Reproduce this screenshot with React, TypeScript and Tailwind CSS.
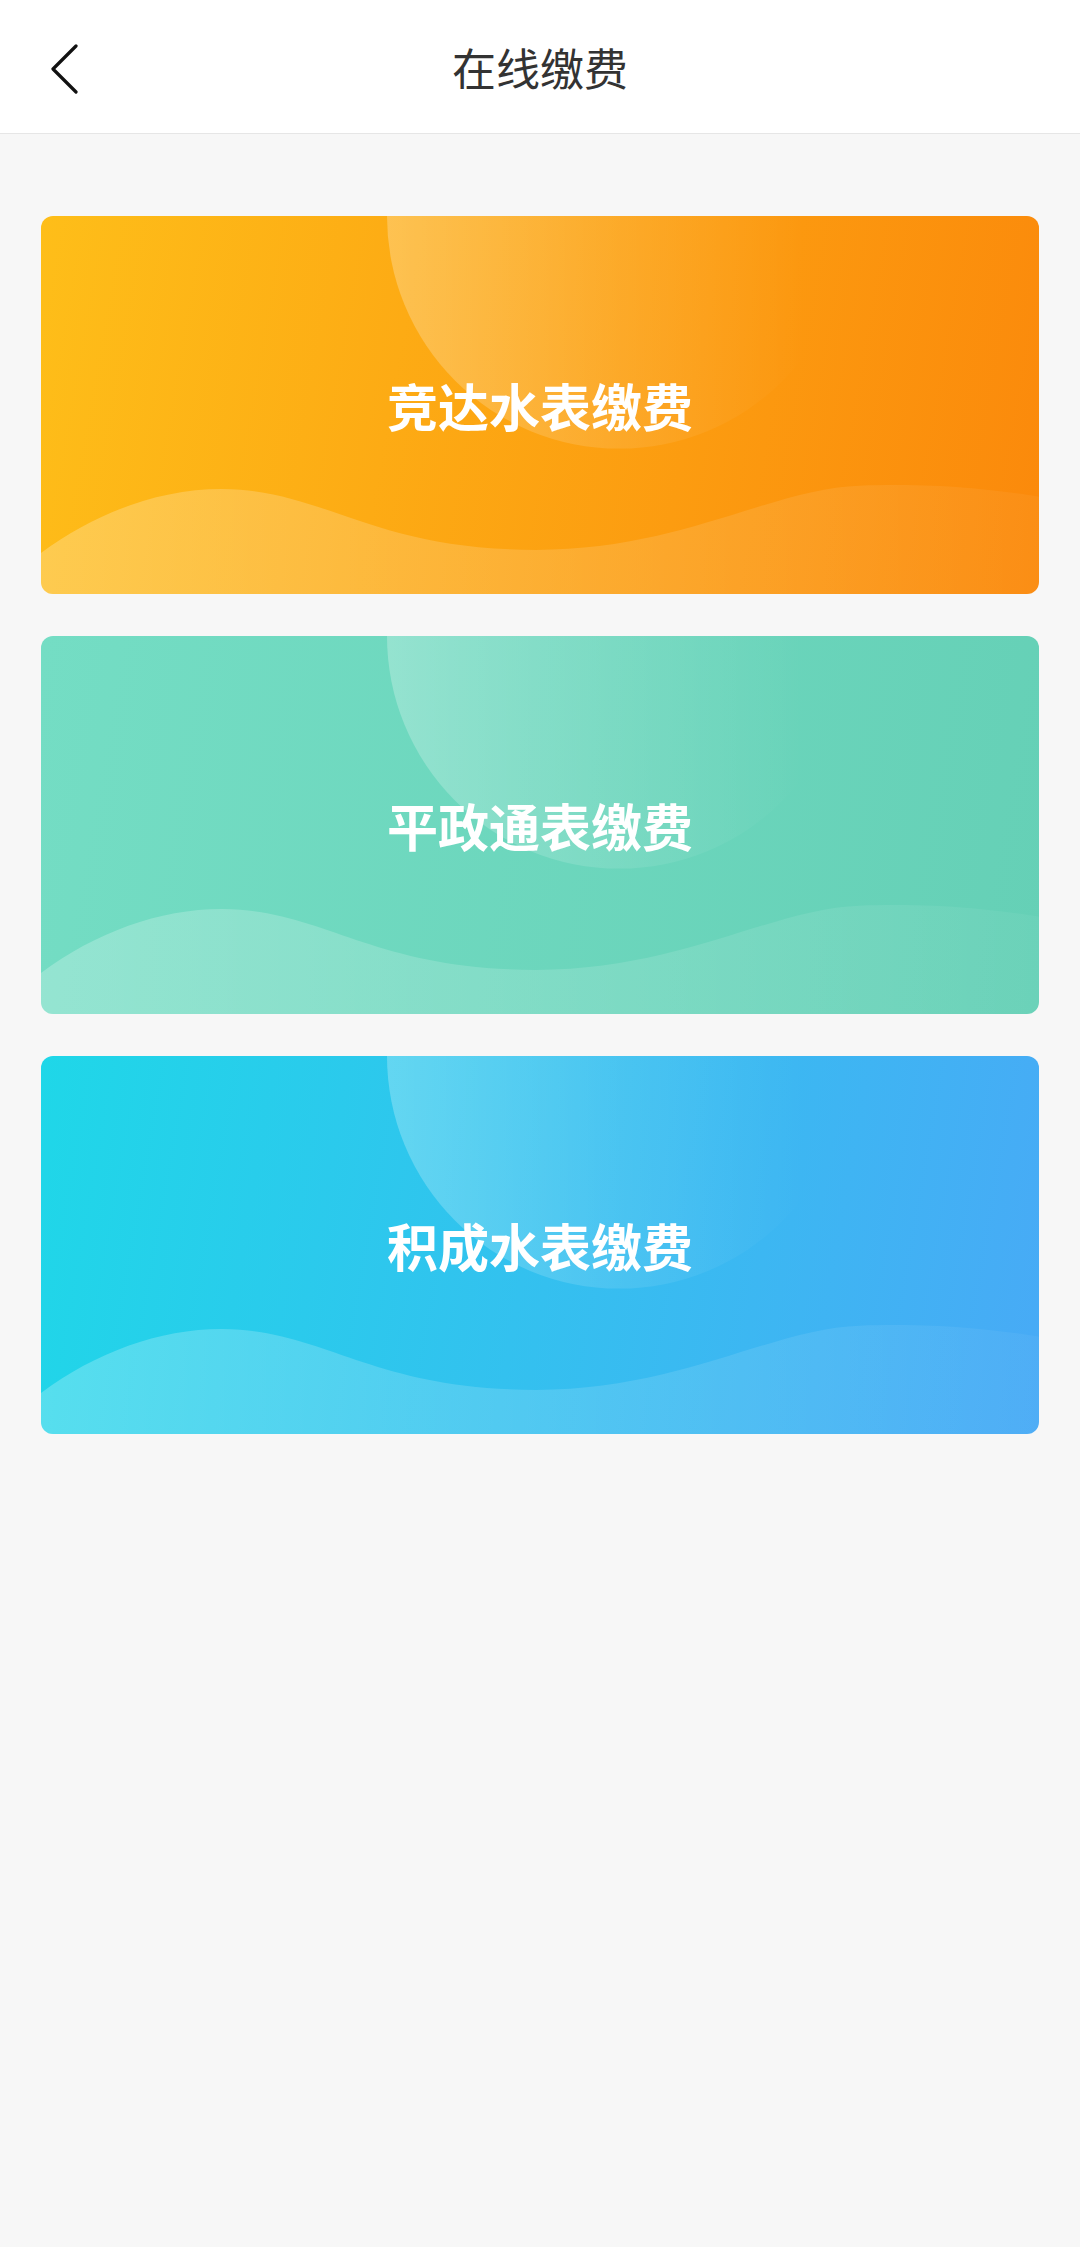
import React from 'react';

interface CardProps {
  title: string;
  from: string;
  to: string;
  id: string;
}

const cards: CardProps[] = [
  { id: 'jd', title: '竞达水表缴费', from: '#FEBE19', to: '#FB890B' },
  { id: 'pzt', title: '平政通表缴费', from: '#74DDC4', to: '#65D0B6' },
  { id: 'jc', title: '积成水表缴费', from: '#1FD7E8', to: '#48AAF6' },
];

const PayCard: React.FC<CardProps> = ({ id, title, from, to }) => {
  return (
    <div
      className="relative h-[378px] rounded-[12px] overflow-hidden flex items-center justify-center cursor-pointer"
      style={{ background: `linear-gradient(100deg, ${from}, ${to})` }}
    >
      {/* decorative circle + wave */}
      <svg
        className="absolute inset-0 w-full h-full"
        viewBox="0 0 998 377"
        preserveAspectRatio="none"
      >
        <defs>
          <linearGradient id={`c-${id}`} x1="0" y1="0" x2="1" y2="0">
            <stop offset="0" stopColor="#fff" stopOpacity="0.26" />
            <stop offset="0.5" stopColor="#fff" stopOpacity="0.1" />
            <stop offset="0.9" stopColor="#fff" stopOpacity="0" />
          </linearGradient>
          <linearGradient id={`w-${id}`} x1="0" y1="0" x2="1" y2="0">
            <stop offset="0" stopColor="#fff" stopOpacity="0.24" />
            <stop offset="1" stopColor="#fff" stopOpacity="0.04" />
          </linearGradient>
        </defs>
        <circle cx="578" cy="0" r="232" fill={`url(#c-${id})`} />
        <path
          d="M0,336 C60,292 130,268 199,273 C290,280 340,333 495,333 C640,333 730,272 819,269 C900,266 960,274 998,280 L998,377 L0,377 Z"
          fill={`url(#w-${id})`}
        />
      </svg>
      <span className="relative text-white text-[51px] font-bold leading-none font-['Noto_Sans_CJK_SC',sans-serif]">
        {title}
      </span>
    </div>
  );
};

const App: React.FC = () => {
  return (
    <div className="min-h-screen bg-[#f7f7f7] font-['Noto_Sans_CJK_SC',sans-serif]">
      {/* Header */}
      <div className="relative h-[134px] bg-white border-b border-[#e6e6e6] flex items-center justify-center">
        <button className="absolute left-[50px] top-[44px]">
          <svg width="30" height="50" viewBox="0 0 30 50" fill="none">
            <polyline
              points="26,2 3,25 26,48"
              stroke="#111"
              strokeWidth="3.2"
              strokeLinecap="round"
              strokeLinejoin="round"
            />
          </svg>
        </button>
        <h1 className="text-[44px] text-[#333] font-normal leading-none">在线缴费</h1>
      </div>

      {/* Cards */}
      <div className="px-[41px] pt-[82px] flex flex-col gap-[42px]">
        {cards.map((c) => (
          <PayCard key={c.id} {...c} />
        ))}
      </div>
    </div>
  );
};

export default App;
